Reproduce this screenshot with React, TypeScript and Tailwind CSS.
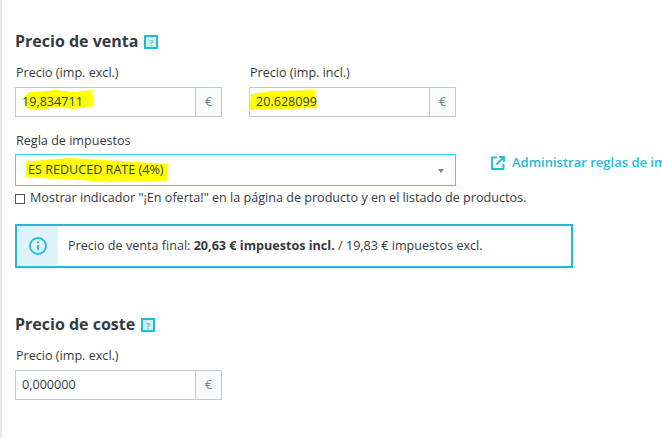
const font = { fontFamily: '"Open Sans", sans-serif' };

function Help() {
  return (
    <span className="ml-[6px] mt-[2px] flex h-[14px] w-[14px] items-center justify-center border-2 border-[#25b9d7] bg-[#cfeef5] text-[9px] font-bold leading-none text-[#6fc3d6]">?</span>
  );
}

function Marker({ className, d }: { className: string; d: string }) {
  return (
    <svg className={`absolute ${className}`} viewBox="0 0 100 20" preserveAspectRatio="none">
      <path d={d} fill="#ffff00" />
    </svg>
  );
}

function PriceInput({ value, marker }: { value: string; marker?: React.ReactNode }) {
  return (
    <div className="flex h-[30px] w-[207px] border border-[#bbcdd2] bg-white">
      <div className="relative flex flex-1 items-center pl-[7px] text-[12.6px] text-[#363a41]">
        {marker}
        <span className="relative -ml-px">{value}</span>
      </div>
      <div className="flex w-[26px] items-center justify-center border-l border-[#bbcdd2] bg-[#f8fafc] text-[12.6px] text-[#6c868e]">€</div>
    </div>
  );
}

export default function App() {
  return (
    <div style={font} className="h-[438px] w-[662px] overflow-hidden border-l-2 border-[#e9e9e9] bg-white pl-[13px] pt-[30px] text-[#363a41]">
      <div className="flex h-[22px] items-center">
        <h2 className="text-[16px] font-bold leading-[22px]">Precio de venta</h2>
        <Help />
      </div>
      <div className="mt-[12px] flex gap-[27px]">
        <div>
          <div className="mb-[6px] pl-px text-[12.6px] leading-[17px]">Precio (imp. excl.)</div>
          <PriceInput
            value="19,834711"
            marker={<Marker className="left-[8px] top-[2px] h-[20px] w-[70px]" d="M0 6 L8 2 L30 1 L45 0 L70 2 L97 0 L100 16 L70 19 L45 17 L20 20 L3 18 Z" />}
          />
        </div>
        <div>
          <div className="mb-[6px] pl-px text-[12.6px] leading-[17px]">Precio (imp. incl.)</div>
          <PriceInput
            value="20.628099"
            marker={<Marker className="left-[-1px] top-[2px] h-[20px] w-[68px]" d="M3 4 L35 1 L97 0 L100 18 L50 19 L0 20 Z" />}
          />
        </div>
      </div>
      <div className="mt-[15px] pl-px text-[12.6px] leading-[17px]">Regla de impuestos</div>
      <div className="mt-[5px] flex items-start">
        <div className="relative flex h-[32px] w-[441px] shrink-0 items-center border border-[#3ed2f0] bg-white pl-[12px] text-[12.6px]">
          <Marker className="left-[10px] top-[3px] h-[24px] w-[141px]" d="M0 3 L30 0 L60 2 L100 5 L100 19 L60 20 L30 18 L0 16 Z" />
          <span className="relative">ES REDUCED RATE (4%)</span>
          <span className="absolute right-[11px] top-[14px] h-0 w-0 border-x-[3px] border-t-[4px] border-x-transparent border-t-[#6c868e]" />
        </div>
        <a className="ml-[35px] mt-[1px] flex h-[16px] items-center whitespace-nowrap text-[13px] font-semibold text-[#25b9d7]">
          <svg width="14" height="14" viewBox="0 0 14 14" fill="none" stroke="#25b9d7" strokeWidth="1.8" className="mr-[7px] shrink-0">
            <path d="M6 1.5H1v11.500h11.500V8" />
            <path d="M5.500 8.500L12.500 1.500M8 1h5v5" />
          </svg>
          Administrar reglas de impuestos
        </a>
      </div>
      <div className="mt-[4px] flex h-[17px] items-center whitespace-nowrap text-[12.6px]">
        <span className="mr-[5px] h-[10px] w-[10px] shrink-0 border border-[#555]" />
        Mostrar indicador "¡En oferta!" en la página de producto y en el listado de productos.
      </div>
      <div className="mt-[17px] flex h-[44px] w-[558px] border-2 border-[#25b9d7] bg-white">
        <div className="flex w-[41px] items-center justify-center bg-[#def3f9]">
          <svg width="20" height="20" viewBox="0 0 20 20" fill="none" stroke="#25b9d7" strokeWidth="1.800">
            <circle cx="10" cy="10" r="8" />
            <path d="M10 9v5.500M10 5.500v1.800" />
          </svg>
        </div>
        <div className="flex items-center pl-[10px] text-[12.6px]">
          <span className="whitespace-pre">Precio de venta final: <b>20,63 € impuestos incl.</b> / 19,83 € impuestos excl.</span>
        </div>
      </div>
      <div className="mt-[45px] flex h-[22px] items-center">
        <h2 className="text-[16px] font-bold leading-[22px]">Precio de coste</h2>
        <Help />
      </div>
      <div className="mt-[12px] pl-px text-[12.6px] leading-[17px]">Precio (imp. excl.)</div>
      <div className="mt-[6px]">
        <PriceInput value="0,000000" />
      </div>
    </div>
  );
}
